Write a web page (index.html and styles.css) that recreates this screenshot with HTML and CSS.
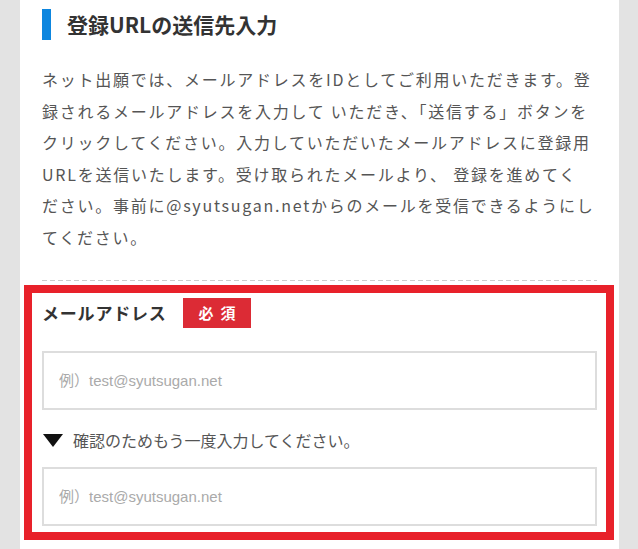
FILE: index.html
```html
<!DOCTYPE html>
<html lang="ja">
<head>
<meta charset="utf-8">
<title>登録URLの送信先入力</title>
<link rel="stylesheet" href="styles.css">
</head>
<body>
<section class="panel">
  <h2 class="heading">登録URLの送信先入力</h2>
  <p class="lead">ネット出願では、メールアドレスをIDとしてご利用いただきます。登<br>録されるメールアドレスを入力して いただき、「送信する」ボタンを<br>クリックしてください。入力していただいたメールアドレスに登録用<br>URLを送信いたします。受け取られたメールより、 登録を進めてく<br>ださい。事前に@syutsugan.netからのメールを受信できるようにし<br>てください。</p>
  <div class="divider"></div>
  <div class="form-box">
    <div class="label-row">
      <span class="label">メールアドレス</span>
      <span class="badge">必須</span>
    </div>
    <input class="field" type="email" placeholder="例）test@syutsugan.net">
    <p class="confirm">確認のためもう一度入力してください。</p>
    <input class="field" type="email" placeholder="例）test@syutsugan.net">
  </div>
</section>
</body>
</html>
```

FILE: styles.css
```css
html, body {
  margin: 0;
  padding: 0;
  background: #e3e3e3;
}

body {
  font-family: "Noto Sans CJK JP", "Noto Sans", sans-serif;
}

.panel {
  margin-left: 20px;
  width: 599px;
  min-height: 549px;
  box-sizing: border-box;
  background: #fff;
  padding: 9px 22px 20px;
}

.heading {
  margin: 0;
  border-left: 9px solid #0d86df;
  padding-left: 16px;
  font-size: 21px;
  font-weight: bold;
  line-height: 31px;
  color: #333;
}

.lead {
  margin: 24px 0 0;
  font-size: 16px;
  line-height: 31.5px;
  letter-spacing: 1.75px;
  color: #555;
  white-space: nowrap;
}

.divider {
  margin-top: 27px;
  height: 1px;
  background: repeating-linear-gradient(to right, #cccccc 0 5px, transparent 5px 8px);
}

.form-box {
  margin: 4px -17px 0 -18px;
  border: 8px solid #e8212a;
  padding: 5px 9px 6px 10px;
}

.label-row {
  display: flex;
  align-items: center;
  gap: 16px;
  height: 30px;
}

.label {
  font-size: 17px;
  font-weight: bold;
  letter-spacing: 0.8px;
  color: #333;
  line-height: 30px;
}

.badge {
  display: block;
  width: 68px;
  height: 30px;
  box-sizing: border-box;
  padding-left: 8px;
  background: #dc2b35;
  color: #fff;
  font-size: 15px;
  font-weight: bold;
  letter-spacing: 7px;
  line-height: 30px;
  text-align: center;
}

.field {
  display: block;
  width: 100%;
  height: 59px;
  box-sizing: border-box;
  margin: 23px 0 0;
  padding: 0 15px;
  border: 2px solid #dddddd;
  border-radius: 0;
  background: #fff;
  font-family: "Liberation Sans", "Noto Sans CJK JP", sans-serif;
  font-size: 15px;
  color: #333;
  outline: none;
  -webkit-appearance: none;
  appearance: none;
}

.field::placeholder {
  color: #aaaaaa;
}

.confirm {
  display: flex;
  align-items: center;
  gap: 10px;
  margin: 18px 0 15px;
  font-size: 16px;
  line-height: 24px;
  color: #555;
}

.confirm::before {
  content: "";
  width: 0;
  height: 0;
  margin-left: 1px;
  border-left: 10px solid transparent;
  border-right: 10px solid transparent;
  border-top: 13px solid #111;
}

.confirm + .field {
  margin-top: 0;
}
```
